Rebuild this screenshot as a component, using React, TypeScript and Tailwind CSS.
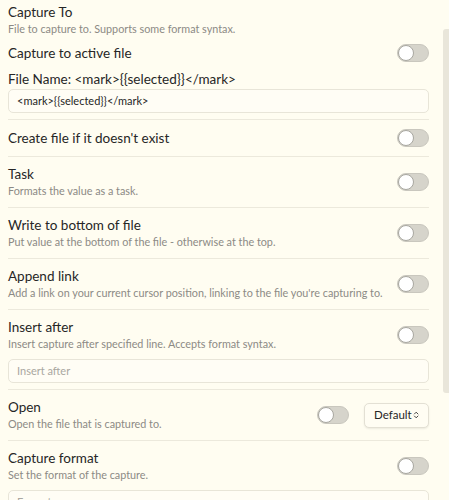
import { ChevronsUpDown } from "lucide-react"

function Toggle() {
  return (
    <div className="w-[32px] h-[18px] rounded-full bg-[#d6d4cb] border border-[#c9c7be] relative shrink-0">
      <div className="absolute left-[0px] top-[0px] w-[16px] h-[16px] rounded-full bg-white border border-[#a8a7a0]" />
    </div>
  )
}

function Row({ name, desc, children }: { name: string; desc?: string; children?: React.ReactNode }) {
  return (
    <div className="flex items-center justify-between border-t border-[#ece9dc] py-[8px]">
      <div className="flex flex-col">
        <div className="text-[13.5px] leading-[18px] text-[#262626]">{name}</div>
        {desc && <div className="text-[10.8px] leading-[16px] text-[#8c8a85]">{desc}</div>}
      </div>
      <div className="flex items-center gap-[15px]">{children}</div>
    </div>
  )
}

function TextBox({ value, placeholder }: { value?: string; placeholder?: string }) {
  return (
    <div className="h-[24px] rounded-[5px] border border-[#e8e5d8] bg-[#fffdf5] flex items-center px-[8px] text-[11px]">
      {value ? <span className="text-[#262626]">{value}</span> : <span className="text-[#a9a7a0]">{placeholder}</span>}
    </div>
  )
}

export default function App() {
  return (
    <div
      className="relative w-[449px] h-[500px] overflow-hidden bg-[#fffdf1] pl-[8px] pr-[20px]"
      style={{ fontFamily: 'Lato, "Noto Sans", sans-serif' }}
    >
      {/* Capture To */}
      <div className="pt-[3px]">
        <div className="text-[13.5px] leading-[18px] text-[#262626]">Capture To</div>
        <div className="text-[10.8px] leading-[16px] text-[#8c8a85]">File to capture to. Supports some format syntax.</div>
      </div>

      <div className="flex items-center justify-between mt-[7px] h-[18px]">
        <div className="text-[13.5px] leading-[18px] text-[#262626]">Capture to active file</div>
        <Toggle />
      </div>

      <div className="mt-[8px] text-[13.5px] leading-[18px] text-[#262626]">File Name: &lt;mark&gt;{"{{selected}}"}&lt;/mark&gt;</div>
      <div className="mt-[1px] pb-[6px]">
        <TextBox value="<mark>{{selected}}</mark>" />
      </div>

      <div className="flex items-center justify-between border-t border-[#ece9dc] py-[9px]">
        <div className="text-[13.5px] leading-[18px] text-[#262626]">Create file if it doesn't exist</div>
        <Toggle />
      </div>

      <Row name="Task" desc="Formats the value as a task.">
        <Toggle />
      </Row>
      <Row name="Write to bottom of file" desc="Put value at the bottom of the file - otherwise at the top.">
        <Toggle />
      </Row>
      <Row name="Append link" desc="Add a link on your current cursor position, linking to the file you're capturing to.">
        <Toggle />
      </Row>

      <div className="border-t border-[#ece9dc] pt-[8px] pb-[6px]">
        <div className="flex items-center justify-between">
          <div className="flex flex-col">
            <div className="text-[13.5px] leading-[18px] text-[#262626]">Insert after</div>
            <div className="text-[10.8px] leading-[16px] text-[#8c8a85]">Insert capture after specified line. Accepts format syntax.</div>
          </div>
          <Toggle />
        </div>
        <div className="mt-[7px]">
          <TextBox placeholder="Insert after" />
        </div>
      </div>

      <Row name="Open" desc="Open the file that is captured to.">
        <Toggle />
        <div className="w-[65px] h-[25px] rounded-[5px] border border-[#e3e0d4] bg-[#fffdf3] shadow-[0_1px_2px_rgba(0,0,0,0.08)] flex items-center justify-between pl-[9px] pr-[8px] text-[11.5px] text-[#262626]">
          <span>Default</span>
          <ChevronsUpDown size={10} strokeWidth={2.5} />
        </div>
      </Row>

      <div className="border-t border-[#ece9dc] pt-[8px]">
        <div className="flex items-center justify-between">
          <div className="flex flex-col">
            <div className="text-[13.5px] leading-[18px] text-[#262626]">Capture format</div>
            <div className="text-[10.8px] leading-[16px] text-[#8c8a85]">Set the format of the capture.</div>
          </div>
          <Toggle />
        </div>
        <div className="mt-[7px]">
          <TextBox placeholder="Format" />
        </div>
      </div>

      {/* scrollbar thumb */}
      <div className="absolute right-0 top-[29px] w-[6px] h-[364px] rounded-l-[3px] bg-[#e9e6da]" />
    </div>
  )
}
